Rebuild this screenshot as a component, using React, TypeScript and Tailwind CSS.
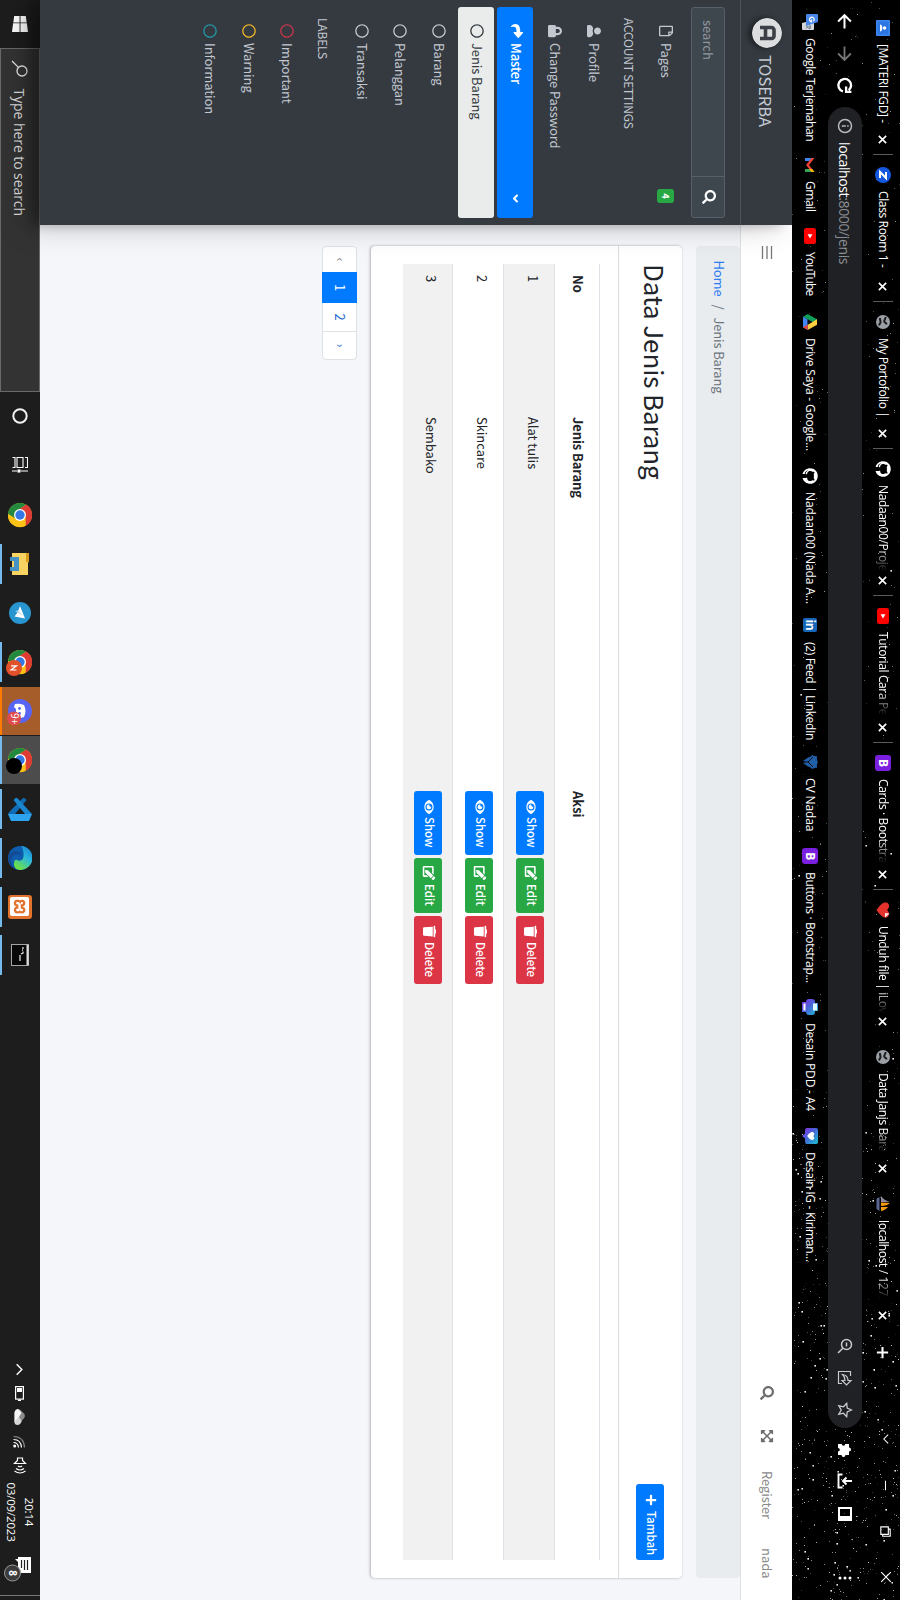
import type { ReactNode } from "react";
import {
  FaShare, FaUser, FaLock, FaSearch, FaRegFile, FaEye, FaEdit, FaTrash, FaPlus,
  FaExpandArrowsAlt, FaRegCircle, FaAngleDown, FaGithub,
} from "react-icons/fa";
import { SiXampp } from "react-icons/si";

const SEGOE = "font-['Open_Sans','Noto_Sans',sans-serif]";
const SOURCE = "font-['Noto_Sans_CJK_SC','Open_Sans',sans-serif]";

/* ---------- star field behind the browser frame ---------- */
function makeStars() {
  let seed = 77;
  const rnd = () => {
    seed = (seed * 1103515245 + 12345) % 2147483648;
    return seed / 2147483648;
  };
  const out: { x: number; y: number; s: number; o: number }[] = [];
  for (let i = 0; i < 1150; i++) {
    const dense = rnd() > 0.45;
    const x = Math.round(dense ? 1130 + rnd() * 470 : rnd() * 1600);
    const y = Math.round(rnd() * 108);
    const big = rnd() > (dense ? 0.88 : 0.97);
    const o = big ? 0.85 + rnd() * 0.15 : dense ? 0.1 + rnd() * 0.65 : 0.1 + rnd() * 0.5;
    out.push({ x, y, s: big ? 1.6 : 1, o });
  }
  return out;
}
const stars = makeStars();

/* ---------- small logos ---------- */
const Youtube = () => (
  <svg width="16" height="16" viewBox="0 0 16 16"><rect x="0" y="2" width="16" height="12" rx="2.5" fill="#f00" /><path d="M6.2 5.6 10.4 8 6.2 10.4z" fill="#fff" /></svg>
);
const Globe = () => (
  <svg width="16" height="16" viewBox="0 0 16 16"><circle cx="8" cy="8" r="7" fill="#9aa0a6" /><path d="M3 5.500c2-.5 2.500 1.500 4.500 1.200 1.500-.3 1-2.200 3-2.200M4 10.800c2 .8 3-.8 4.500-.3 1.600.5 1.500 2 3 .8" stroke="#1a1a1a" strokeWidth="2" fill="none" /></svg>
);
const Boot = () => (
  <span className="flex h-4 w-4 items-center justify-center rounded-[3px] bg-[#7a1fe0] text-[12px] leading-none font-bold text-white">B</span>
);
const LinkedIn = () => (
  <span className="flex h-[14px] w-[14px] items-center justify-center rounded-[2px] bg-[#1667b8] text-[12px] leading-none font-bold text-white">in</span>
);
const Zoom = () => (
  <svg width="16" height="16" viewBox="0 0 16 16"><circle cx="8" cy="8" r="8" fill="#1558e0" /><path d="M5 5h6L5 11h6" stroke="#fff" strokeWidth="2" fill="none" /></svg>
);
const Classroom = () => (
  <svg width="16" height="16" viewBox="0 0 16 16"><rect x="0" y="1" width="16" height="14" rx="1" fill="#3c87ee" /><rect x="1.500" y="2.500" width="13" height="11" fill="#2a76e3" /><circle cx="8" cy="6.500" r="1.800" fill="#fff" /><path d="M4.500 11c0-3 7-3 7 0z" fill="#fff" /></svg>
);
const Heart = () => (
  <svg width="16" height="16" viewBox="0 0 16 16"><path d="M8 14.500C2 10 0 8 .5 4.800 1 1.500 5.500.8 8 4c2.500-3.200 7-2.500 7.500.8C16 8 14 10 8 14.500z" fill="#e5322d" /><path d="M11 6l.500-4.500L15.500 6z" fill="#fff" opacity=".9" /></svg>
);
const Pma = () => (
  <svg width="16" height="16" viewBox="0 0 16 16"><path d="M6 1v9H0C3 8 5 5 6 1z" fill="#8d8aa0" /><path d="M7 1c2 2 3 5 3 9H6.500zM11 3c2 2 3.500 4 4 7h-4z" fill="#f89c0e" /><path d="M1 11.500h14l-2 3H3z" fill="#5b6693" /></svg>
);
const Translate = () => (
  <svg width="16" height="16" viewBox="0 0 16 16"><path d="M6 4h9a1 1 0 0 1 1 1v10a1 1 0 0 1-1 1H9z" fill="#d5d8dc" /><path d="M1 0h7l4 12H1a1 1 0 0 1-1-1V1a1 1 0 0 1 1-1z" fill="#4a86e8" /><path d="M7.300 4.700A2.300 2.300 0 1 0 7.800 6.500H5.500" stroke="#fff" strokeWidth="1.200" fill="none" /><path d="M11 8h4M13 7v1M14.500 8c-.5 2-1.500 3-3 4M12 9.500l2.500 2.500" stroke="#5f7488" fill="none" /></svg>
);
const Gmail = () => (
  <svg width="16" height="16" viewBox="0 0 16 16"><path d="M1 4v9h3V7z" fill="#4285f4" /><path d="M15 4v9h-3V7z" fill="#34a853" /><path d="M1 3.500 8 9l7-5.500v3L8 12 1 6.500z" fill="#ea4335" /><path d="M12 5.800 15 3.500v3l-3 2.300z" fill="#fbbc04" /></svg>
);
const Drive = () => (
  <svg width="16" height="16" viewBox="0 0 16 16"><path d="M5.300 1h5.400L5.300 10.500 2.700 15 0 10.300z" fill="#0f9d58" /><path d="M5.300 1h5.400L16 10.300h-5.300z" fill="#ffcd40" /><path d="M5.400 10.300H16L13.300 15H2.700z" fill="#4285f4" /><path d="M8 5.800 5.400 10.300h5.200z" fill="#111" /><path d="m10.600 10.300 5.400 0L13.300 15z" fill="#ea4335" /></svg>
);
const CvLogo = () => (
  <svg width="16" height="16" viewBox="0 0 16 16"><path d="M8 0c2 1.500 4 1 6 1-1 2 1 4 1 5-1.500 1-2 2-2.500 4L9 15l-1-3-1 3-3.500-5C3 8 2.500 7 1 6c0-1 2-3 1-5 2 0 4 .5 6-1z" fill="#205ea6" /><path d="M3 5l5 5 5-5M8 10v4" stroke="#06101f" fill="none" /></svg>
);
const Canva = ({ heart }: { heart?: boolean }) => (
  <svg width="16" height="16" viewBox="0 0 16 16">
    <defs><linearGradient id="cv" x1="1" y1="0" x2="0" y2="1"><stop stopColor="#17c3cf" /><stop offset=".55" stopColor="#4a62d8" /><stop offset="1" stopColor="#8b2be8" /></linearGradient></defs>
    {heart ? (
      <><path d="M2 0h12a2 2 0 0 1 2 2v9a2 2 0 0 1-2 2h-3.500L8 16l-2.500-3H2a2 2 0 0 1-2-2V2a2 2 0 0 1 2-2z" fill="url(#cv)" /><path d="M8 10.800C4.500 8.500 3.700 6.500 4.200 5c.7-1.600 2.800-1.800 3.800 0 1-1.800 3.100-1.600 3.800 0 .5 1.500-.3 3.500-3.800 5.800z" fill="#fff" /></>
    ) : (
      <><path d="M4 0h8v3h1a3 3 0 0 1 3 3v3a3 3 0 0 1-3 3v4H3v-4a3 3 0 0 1-3-3V6a3 3 0 0 1 3-3h1z" fill="url(#cv)" /><rect x="4.500" y="1" width="7" height="4" fill="#dffcff" /><rect x="4.500" y="12.500" width="7" height="2" fill="#fff" /></>
    )}
  </svg>
);

/* ---------- browser frame ---------- */
const FADE = "[mask-image:linear-gradient(to_right,black_72%,transparent_100%)]";
const tabs: { icon: ReactNode; text: string; sep: boolean; fade: string }[] = [
  { icon: <Classroom />, text: "[MATERI FGD] -", sep: true, fade: "" },
  { icon: <Zoom />, text: "Class Room 1 -", sep: true, fade: "" },
  { icon: <Globe />, text: "My Portofolio |", sep: true, fade: "" },
  { icon: <FaGithub className="h-4 w-4 text-white" />, text: "Nadaan00/Proje", sep: true, fade: FADE },
  { icon: <Youtube />, text: "Tutorial Cara Pe", sep: true, fade: FADE },
  { icon: <Boot />, text: "Cards · Bootstra", sep: true, fade: FADE },
  { icon: <Heart />, text: "Unduh file | iLov", sep: false, fade: FADE },
  { icon: <Globe />, text: "Data Janjs Bara", sep: false, fade: FADE },
  { icon: <Pma />, text: "localhost / 127.", sep: false, fade: FADE },
];

const bookmarks: { icon: ReactNode; text: string; w: string }[] = [
  { icon: <Translate />, text: "Google Terjemahan", w: "w-[143px] tracking-[-0.38px]" },
  { icon: <Gmail />, text: "Gmail", w: "w-[71px] tracking-[-0.4px]" },
  { icon: <Youtube />, text: "YouTube", w: "w-[86px] tracking-[-0.85px]" },
  { icon: <Drive />, text: "Drive Saya - Google...", w: "w-[154px] tracking-[-0.2px]" },
  { icon: <FaGithub className="h-4 w-4 text-white" />, text: "Nadaan00 (Nada A...", w: "w-[150px] tracking-[-0.1px]" },
  { icon: <LinkedIn />, text: "(2) Feed | LinkedIn", w: "w-[136px] tracking-[-0.35px]" },
  { icon: <CvLogo />, text: "CV Nadaa", w: "w-[94px] tracking-[-0.1px]" },
  { icon: <Boot />, text: "Buttons · Bootstrap...", w: "w-[151px] tracking-[-0.33px]" },
  { icon: <Canva />, text: "Desain PDD - A4", w: "w-[129px] tracking-[-0.18px]" },
  { icon: <Canva heart />, text: "Desain IG - Kiriman...", w: "w-[160px] tracking-[-0.3px]" },
];

const Line = ({ d, size = 16, sw = 1.5, className = "" }: { d: string; size?: number; sw?: number; className?: string }) => (
  <svg width={size} height={size} viewBox="0 0 16 16" fill="none" stroke="currentColor" strokeWidth={sw} className={`shrink-0 ${className}`}><path d={d} /></svg>
);

function BrowserFrame() {
  return (
    <header className={`relative h-[108px] shrink-0 bg-black text-white ${SEGOE}`}>
      <svg className="absolute inset-0" width="1600" height="108">
        {stars.map((s, i) => (
          <rect key={i} x={s.x} y={s.y} width={s.s} height={s.s} fill="#fff" opacity={s.o} />
        ))}
      </svg>
      <div className="relative flex h-[34px] items-center pl-2">
        {tabs.map((t) => (
          <div key={t.text} className="flex w-[147px] shrink-0 items-center pl-3">
            <span className="w-4 shrink-0">{t.icon}</span>
            <span className="ml-2 flex w-[89px] shrink-0">
              <span className={`text-[12px] leading-[18px] tracking-[-0.37px] whitespace-nowrap ${t.fade}`}>{t.text}</span>
            </span>
            <Line d="M3.500 3.500l9 9M12.500 3.500l-9 9" size={13} sw={2} />
            <span className={t.sep ? "ml-auto h-5 w-px bg-[#5a5a5e]" : "hidden"} />
          </div>
        ))}
        <Line d="M8 2v12M2 8h12" size={15} sw={2.2} className="ml-[14px]" />
        <div className="ml-auto flex -translate-y-[3px] items-center">
          <div className="flex w-[47px] justify-center"><Line d="M3 5.500l5 5 5-5" size={14} sw={1.2} /></div>
          <div className="flex w-[46px] justify-center"><Line d="M3 8h10" size={15} sw={1.1} /></div>
          <div className="flex w-[46px] justify-center"><Line d="M3 5h8v8H3zM5.500 5V3H13v8h-2" size={15} sw={1.2} /></div>
          <div className="flex w-[46px] justify-center"><Line d="M2.500 2.500l11 11M13.500 2.500l-11 11" size={14} sw={1.3} /></div>
        </div>
      </div>
      <div className="relative mt-1 flex h-[34px] items-center pl-[13px]">
        <Line d="M14.500 8H2.500M8 2 2 8l6 6" size={17} sw={1.9} />
        <Line d="M1.500 8h12M8 2l6 6-6 6" size={17} sw={1.7} className="ml-[15px] text-[#777]" />
        <Line d="M13.600 9.500A6 6 0 1 1 12.500 4M14 1.500V6.500H9" size={17} sw={2.2} className="ml-[15px]" />
        <div className="ml-[13px] flex h-[34px] w-[1321px] items-center rounded-full bg-[#202124] pl-[11px] text-[14px]">
          <svg width="16" height="16" viewBox="0 0 16 16" fill="none" stroke="#b5b8bc" strokeWidth="1.500"><circle cx="8" cy="8" r="6.500" /><path d="M8 7.200v4M8 4.300v1.600" /></svg>
          <span className="ml-[8px] tracking-[-0.38px]">localhost<span className="text-[#8d9196]">:8000/jenis</span></span>
          <div className="mr-[10px] ml-auto flex gap-[16px] text-[#c8cacd]">
            <svg width="16" height="16" viewBox="0 0 16 16" fill="none" stroke="currentColor" strokeWidth="1.500"><circle cx="6.500" cy="6.500" r="5" /><path d="M10.200 10.200 15 15M4.500 6.500h4" /></svg>
            <Line d="M6 2.500H1.500v12h12V11M4.500 10.500C5 6.500 7.500 5 10.500 5V2L15 6.500 10.500 11V8C8 8 6 8.800 4.500 10.500z" sw={1.2} />
            <Line d="M8 1.500l2 4.300 4.700.5-3.500 3.200 1 4.700L8 11.800l-4.200 2.400 1-4.700L1.300 6.300 6 5.800z" sw={1.3} />
          </div>
        </div>
        <svg width="16" height="16" viewBox="0 0 16 16" fill="#fff" className="ml-[14px]"><path d="M2 4h3.500a2 2 0 1 1 4 0H13v3.500a2 2 0 1 1 0 4V15H9.500a1.800 1.800 0 0 0-3.600 0H2v-3.800a1.700 1.700 0 0 0 0-3.400z" /></svg>
        <Line d="M8 1v9M4.500 6.500 8 10l3.500-3.500M1.500 10.500V14.500h13V10.500" sw={1.9} className="ml-[15px]" />
        <svg width="14" height="14" viewBox="0 0 14 14" className="ml-[18px]"><rect x="1" y="1" width="12" height="12" fill="none" stroke="#fff" strokeWidth="2" /><rect x="9" y="1" width="4" height="12" fill="#fff" /></svg>
        <svg width="4" height="14" viewBox="0 0 4 14" fill="#fff" className="ml-[55px]"><circle cx="2" cy="2" r="1.500" /><circle cx="2" cy="7" r="1.500" /><circle cx="2" cy="12" r="1.500" /></svg>
      </div>
      <div className="relative flex h-9 items-center pl-[14px] text-[12px]">
        {bookmarks.map((b) => (
          <div key={b.text} className={`flex shrink-0 items-center gap-2 whitespace-nowrap ${b.w}`}>
            <span className="w-4 shrink-0">{b.icon}</span>
            {b.text}
          </div>
        ))}
      </div>
    </header>
  );
}

/* ---------- dashboard sidebar ---------- */
const ring = "h-[14px] w-[14px]";
function Item({ icon, label, className = "h-[38.5px]", end }: { icon: ReactNode; label: string; className?: string; end?: ReactNode }) {
  return (
    <div className={`mx-[7px] flex items-center rounded-[3px] pl-[17px] ${className}`}>
      <span className="flex w-[14px] justify-center">{icon}</span>
      <span className="ml-[5px] pb-px leading-none tracking-[-0.1px]">{label}</span>
      {end}
    </div>
  );
}

function Sidebar() {
  return (
    <aside className="relative z-10 h-[752px] w-[225px] shrink-0 bg-[#343a40] text-[13px] text-[#c2c7d0] shadow-[0_14px_28px_rgba(0,0,0,.25),0_10px_10px_rgba(0,0,0,.22)]">
      <div className="flex h-[52px] items-center border-b border-[#4b545c] pb-px pl-[18px]">
        <svg width="30" height="30" viewBox="0 0 30 30" className="rounded-full shadow-[0_3px_6px_rgba(0,0,0,.5)]">
          <circle cx="15" cy="15" r="15" fill="#dcdddf" />
          <path d="M9.500 22V10.500a2.500 2.500 0 0 1 2.500-2.500h6a2.500 2.500 0 0 1 2.500 2.500V22M9.500 16.500h11" fill="none" stroke="#3b4046" strokeWidth="3.600" />
        </svg>
        <span className="ml-[7px] pt-[2px] text-[16.500px] leading-none tracking-[-0.1px]">TOSERBA</span>
      </div>
      <div className="mx-[7px] mt-[15px] flex h-[34px] rounded-[3px] border border-[#56606a] bg-[#3f474e] text-[#8f969e]">
        <span className="flex w-[168px] items-center pl-3">search</span>
        <span className="flex flex-1 items-center justify-center border-l border-[#56606a] pb-[2px] text-white"><FaSearch className="h-[14px] w-[14px]" /></span>
      </div>
      <div className="h-[6px]" />
      <Item icon={<FaRegFile className="h-[14px] w-[14px]" />} label="Pages" end={<span className="mr-[15px] ml-auto flex h-[17px] w-[14px] items-center justify-center rounded-[3px] bg-[#28a745] text-[9.500px] font-bold text-white">4</span>} />
      <div className="flex h-[33.5px] items-center pt-[2px] pl-[18px] text-[12px] leading-none tracking-[-0.2px]">ACCOUNT SETTINGS</div>
      <Item icon={<FaUser className="h-[14px] w-[14px]" />} label="Profile" />
      <Item icon={<FaLock className="h-[14px] w-[14px]" />} label="Change Password" />
      <Item icon={<FaShare className="mb-[2px] h-[14px] w-[14px]" />} label="Master" className="mt-[3px] h-9 bg-[#007bff] pb-[2px] pl-[16px] font-medium tracking-[-0.2px] text-white" end={<FaAngleDown className="mr-[13px] ml-auto h-[13px] w-[13px]" />} />
      <Item icon={<FaRegCircle className={ring} />} label="Jenis Barang" className="mt-[3px] h-9 bg-[#e9ecea] pb-[2px] text-[#343a40]" />
      <Item icon={<FaRegCircle className={ring} />} label="Barang" />
      <Item icon={<FaRegCircle className={ring} />} label="Pelanggan" />
      <Item icon={<FaRegCircle className={ring} />} label="Transaksi" />
      <div className="flex h-[36px] items-center pt-[2px] pl-[18px] text-[12px] leading-none tracking-[-0.2px]">LABELS</div>
      <Item icon={<FaRegCircle className={`${ring} text-[#c7364a]`} />} label="Important" />
      <Item icon={<FaRegCircle className={`${ring} text-[#f0b429]`} />} label="Warning" />
      <Item icon={<FaRegCircle className={`${ring} text-[#2596a5]`} />} label="Information" />
    </aside>
  );
}

/* ---------- dashboard content ---------- */
const rows = ["Alat tulis", "Skincare", "Sembako"];
const btn = "flex h-7 items-center rounded-[3px] pb-[2px] text-[11.500px] leading-none font-medium tracking-[-0.05px] text-white";

function Content() {
  return (
    <div className="flex-1 bg-[#f4f6f9] text-[13px] text-[#212529]">
      <nav className="flex h-[52px] items-center border-b border-[#dee2e6] bg-white pr-[22px] pb-[2px] pl-[21px] text-[#8a8a8a]">
        <svg width="13" height="12" viewBox="0 0 13 12" stroke="#777" strokeWidth="1.300"><path d="M0 1.500h13M0 6h13M0 10.500h13" /></svg>
        <FaSearch className="ml-auto h-[14px] w-[14px] text-[#6e6e6e]" />
        <FaExpandArrowsAlt className="ml-[29px] h-[14px] w-[14px] text-[#6e6e6e]" />
        <span className="ml-[28px] w-[48px] pt-px tracking-[-0.1px]">Register</span>
        <span className="ml-[29px] w-[30px] pt-px">nada</span>
      </nav>
      <div className="mr-[22px] ml-[21px]">
        <div className="flex h-[44px] items-center rounded-[4px] bg-[#e9ecef] pb-[2px] pl-[14.500px] tracking-[-0.15px] text-[#6c757d]">
          <span className="text-[#2b7bf3]">Home</span>
          <span className="mx-2">/</span>
          <span>Jenis Barang</span>
        </div>
        <section className="mt-[14px] h-[311px] rounded-[4px] bg-white shadow-[0_0_1px_rgba(0,0,0,.25),0_1px_3px_rgba(0,0,0,.25)]">
          <div className="flex h-[64px] items-center justify-between border-b border-[#dadcdf] pr-[18px] pl-[18px]">
            <h3 className="-translate-y-[5px] text-[26px] leading-none tracking-[-0.1px]">Data Jenis Barang</h3>
            <button className={`${btn} w-[76px] bg-[#007bff] pl-[10px]`}><FaPlus className="mr-[5px] h-[12px] w-[12px]" />Tambah</button>
          </div>
          <div className="mx-[18px] mt-[18px] border-t border-[#dee2e6]">
            <div className="grid h-[44px] grid-cols-[142px_374px_1fr] items-center pb-[2px] font-bold">
              <span className="pl-[11px]">No</span><span className="pl-[11px] tracking-[-0.1px]">Jenis Barang</span><span className="pl-[11px]">Aksi</span>
            </div>
            {rows.map((r, i) => (
              <div key={r} className="grid h-[50.75px] grid-cols-[142px_374px_1fr] border-t border-[#dee2e6] pt-[10px] odd:bg-white even:bg-[#f1f1f1]">
                <span className="pl-[11px] leading-[21px]">{i + 1}</span>
                <span className="pl-[11px] leading-[21px] tracking-[-0.05px]">{r}</span>
                <div className="flex gap-[3px] pl-[11px]">
                  <button className={`${btn} w-[64px] bg-[#007bff] pl-[9px]`}><FaEye className="mr-[3px] h-[14px] w-[14px]" />Show</button>
                  <button className={`${btn} w-[55px] bg-[#28a745] pl-[8px]`}><FaEdit className="mr-[4px] h-[14px] w-[14px]" />Edit</button>
                  <button className={`${btn} w-[68px] bg-[#dc3545] pl-[9px]`}><FaTrash className="mr-[4px] h-[13px] w-[13px]" />Delete</button>
                </div>
              </div>
            ))}
          </div>
        </section>
        <div className="mt-[14px] flex h-[35px] w-[114px] items-stretch rounded-[4px] border border-[#dee2e6] bg-white text-[#1668c9]">
          <span className="flex w-[25px] items-center justify-center pb-[3px] text-[12px] text-[#6c757d]">‹</span>
          <span className="-my-px flex w-[31px] items-center justify-center bg-[#007bff] pb-[2px] text-white">1</span>
          <span className="flex w-[29px] items-center justify-center border-r border-[#dee2e6] pb-[2px]">2</span>
          <span className="flex flex-1 items-center justify-center pb-[3px] text-[12px]">›</span>
        </div>
      </div>
    </div>
  );
}

/* ---------- desktop taskbar ---------- */
const ChromeLogo = ({ children }: { children?: ReactNode }) => (
  <svg width="30" height="28" viewBox="-15 -14 30 28" className="overflow-visible">
    <circle r="12" fill="#fbc116" />
    <path d="M0-5.500H10.800A12 12 0 0 0-10.400-6L-5 2z" fill="#dd3b34" />
    <path d="M-10.400-6A12 12 0 0 0-1 12L4.500 3-5 2z" fill="#23893f" />
    <path d="M10.800-5.500A12 12 0 0 1-1 12L4.800 3 4-5.500z" fill="#fbc116" />
    <circle r="6" fill="#fff" /><circle r="4.700" fill="#3478e5" />
    {children}
  </svg>
);

function Slot({ children, line = "", className = "w-[49px]" }: { children: ReactNode; line?: string; className?: string }) {
  return (
    <div className={`relative flex h-10 shrink-0 items-center justify-center ${className}`}>
      {children}
      {line && <span className={`absolute bottom-0 h-[2px] ${line}`} />}
    </div>
  );
}

function Taskbar() {
  return (
    <footer className={`flex h-10 shrink-0 items-center bg-[#1d1d1d] text-white ${SEGOE}`}>
      <div className="flex w-12 justify-center">
        <svg width="16" height="16" viewBox="0 0 16 16" fill="#fff"><path d="M0 2.200 6.400 1.300v6.200H0zM7.300 1.100 16 0v7.500H7.300zM0 8.400h6.400v6.300L0 13.800zM7.300 8.400H16V16l-8.700-1.100z" /></svg>
      </div>
      <div className="flex h-10 w-[344px] items-center border border-[#6a6a6a] bg-[#333] pl-[11px] text-[14px] text-[#dcdcdc]">
        <svg width="17" height="17" viewBox="0 0 17 17" fill="none" stroke="#e6e6e6" strokeWidth="1.300"><circle cx="11" cy="6" r="5" /><path d="M7.400 9.600 1 16" /></svg>
        <span className="ml-[11.500px] pt-px tracking-[-0.07px]">Type here to search</span>
      </div>
      <Slot className="-ml-px w-[49px]"><svg width="16" height="16" viewBox="0 0 16 16"><circle cx="8" cy="8" r="6.700" fill="none" stroke="#f2f2f2" strokeWidth="2" /></svg></Slot>
      <Slot><svg width="16" height="16" viewBox="0 0 16 16" fill="none" stroke="#fff" strokeWidth="1.100"><path d="M.5 3V.5h10V3M.5 5h10v6H.5zM.5 15.500V13h10v2.500M14 0v7M14 11v5" /><rect x="13" y="8" width="2" height="2" fill="#fff" /></svg></Slot>
      <Slot className="ml-px w-[49px]"><ChromeLogo /></Slot>
      <Slot line="left-[5px] w-10 bg-[#76b9ed]">
        <svg width="22" height="20" viewBox="0 0 22 20"><path d="M0 1h9l1 2h-9z" fill="#e0a526" /><rect x="0" y="2" width="22" height="16" fill="#f9d362" /><path d="M0 1h9v3H0z" fill="#d99b1c" /><path d="M4 20v-9h14v9h-4v-4H8v4z" fill="#4592c4" /></svg>
      </Slot>
      <Slot><svg width="22" height="22" viewBox="0 0 22 22"><circle cx="11" cy="11" r="11" fill="#2795cf" /><path d="M4 11 16.500 6 14.500 16.500 10.500 13.500z" fill="#fff" /><path d="M8.500 12.500 14 8l-4 6-1 2z" fill="#bcdff2" /></svg></Slot>
      <Slot line="left-[5px] w-10 bg-[#76b9ed]"><ChromeLogo><circle cx="6" cy="6" r="8" fill="#e3512b" /><path d="M3.800 9V3.500L8 9V3.500" stroke="#fff" strokeWidth="1.200" fill="none" /></ChromeLogo></Slot>
      <Slot className="ml-px w-[48px] bg-[#a65d29]" line="left-0 w-12 bg-[#ff7b00]">
        <svg width="30" height="28" viewBox="-15 -14 30 28" className="overflow-visible"><circle r="12" fill="#5865f2" /><path d="M-6-4Q0-7 6-4 8 1 7 5L4 6 2 4H-2L-4 6-7 5Q-8 1-6-4z" fill="#fff" /><circle cx="-2.500" cy="0.500" r="1.400" fill="#5865f2" /><circle cx="2.500" cy="0.500" r="1.400" fill="#5865f2" /><circle cx="7.500" cy="6" r="7" fill="#dd4b4b" /><text x="2" y="9.500" fontSize="10" fill="#fff">9+</text></svg>
      </Slot>
      <Slot className="ml-px w-[48px] bg-[#4c4c4c]" line="left-0 w-12 bg-[#76b9ed]"><ChromeLogo><circle cx="6" cy="6" r="8" fill="#000" /></ChromeLogo></Slot>
      <Slot className="w-[49px]" line="left-[5px] w-10 bg-[#76b9ed]"><svg width="24" height="24" viewBox="0 0 24 24"><path d="M17 0v24l-3-2L1.500 9.500c-1-1-.5-2 0-2.500L3 5.500 17 17z" fill="#0f6db5" /><path d="M17 0v7L3 18.500 1.500 17c-1-1-.8-2 0-2.700z" fill="#1a86d0" /><path d="M17 0l7 3v18l-7 3z" fill="#2fa4ee" /></svg></Slot>
      <Slot line="left-[5px] w-10 bg-[#76b9ed]">
        <svg width="24" height="24" viewBox="0 0 24 24"><defs><linearGradient id="e1" x1="0" y1="0" x2="1" y2=".6"><stop stopColor="#1479d0" /><stop offset=".5" stopColor="#2bb8dc" /><stop offset="1" stopColor="#6be04a" /></linearGradient></defs><circle cx="12" cy="12" r="12" fill="#0d5cae" /><path d="M0 11A12 12 0 0 1 24 12c0 4-3 6-6 6-4 0-5-1.500-4-3 1.500-2 1-6-3.500-6.500C6 8 2 9 0 11z" fill="url(#e1)" /><path d="M10 10c-4 4-1 11 5 11 3 0 5.500-1 7-3-3 7-12 8-16 2-2.500-4-.5-8.500 4-10z" fill="#134a92" /></svg>
      </Slot>
      <Slot line="left-[5px] w-10 bg-[#76b9ed]"><span className="flex h-6 w-6 items-center justify-center rounded-[3px] bg-[#e2732c]"><SiXampp className="h-[19px] w-[19px] text-white" /></span></Slot>
      <Slot className="w-[48px]" line="left-[4px] w-10 bg-[#76b9ed]"><svg width="22" height="18" viewBox="0 0 22 18"><rect x=".5" y=".5" width="21" height="17" fill="#080808" stroke="#a5a5a5" /><path d="M1 1.500h20" stroke="#ddd" strokeWidth="2" /><path d="M3 6h2M6 6v1M7.500 6h1.500l1 2M11 9h6" stroke="#ddd" strokeWidth="1.300" /></svg></Slot>

      <div className="ml-auto flex h-10 items-center">
        <div className="flex w-6 justify-center"><Line d="M2.500 11 8 5.500l5.500 5.500" size={15} sw={1.500} /></div>
        <div className="flex w-6 justify-center"><svg width="15" height="9" viewBox="0 0 15 9"><rect x=".6" y=".6" width="12.500" height="7.800" fill="none" stroke="#fff" strokeWidth="1.200" /><rect x="2" y="2" width="4" height="5" fill="#fff" /><rect x="13.500" y="3" width="1.500" height="3" fill="#fff" /></svg></div>
        <div className="flex w-6 justify-center"><svg width="16" height="11" viewBox="0 0 16 11"><path d="M4 10.500A4 4 0 0 1 2 3.500Q7-3 11.500 3A4 4 0 0 1 13 10.500z" fill="#8b8b8b" /><path d="M3 10.500Q-1 9 .5 6L4 3.500l10 6.500-1 .5z" fill="#f5f5f5" /><path d="M8 6l4-2.500q4 1 4 4T13 10.500z" fill="#d5d5d5" /></svg></div>
        <div className="flex w-[25px] justify-center"><svg width="13" height="13" viewBox="0 0 13 13" fill="none" stroke="#fff" strokeWidth="1.200"><circle cx="11" cy="11.300" r="1.500" fill="#fff" stroke="none" /><path d="M7.500 12.500Q7.500 8 12.500 7.500M4.500 12.500Q4.500 5 12.500 4.500" /><path d="M1.500 12.500Q1.500 2 12.500 1.500" stroke="#888" /></svg></div>
        <div className="flex w-[23px] justify-center"><svg width="17" height="14" viewBox="0 0 17 14" fill="none" stroke="#fff" strokeWidth="1.200"><path d="M1 4.500h2.500l3-3v11l-3-3H1zM9 5q1.500 2 0 4M11.500 3q3 4 0 8M14 1.500q4 5.500 0 11" /></svg></div>
        <div className="flex w-[70px] flex-col items-center pb-px text-[11.500px] leading-[17.500px] tracking-[-0.2px]"><span>20:14</span><span>03/09/2023</span></div>
        <div className="relative flex w-[46px] justify-center">
          <svg width="34" height="30" viewBox="0 0 34 30" className="overflow-visible"><path d="M4 4h16v13H9l-3 3v-3H4z" fill="#fff" /><path d="M7 7.500h10M7 10.500h10M7 13.500h8" stroke="#1d1d1d" strokeWidth="1.200" /><circle cx="20" cy="22.500" r="8" fill="#3c3c3c" stroke="#999" /><text x="17.300" y="26.200" fontSize="10" fontWeight="700" fill="#fff">8</text></svg>
        </div>
        <span className="mr-1 ml-[2px] h-10 w-px bg-[#777]" />
      </div>
    </footer>
  );
}

export default function App() {
  return (
    <div className="h-[1600px] w-[900px] overflow-hidden bg-black">
      <div className={`flex h-[900px] w-[1600px] origin-top-left flex-col [transform:translateX(900px)_rotate(90deg)] ${SOURCE}`}>
        <BrowserFrame />
        <div className="flex h-[752px]">
          <Sidebar />
          <Content />
        </div>
        <Taskbar />
      </div>
    </div>
  );
}
